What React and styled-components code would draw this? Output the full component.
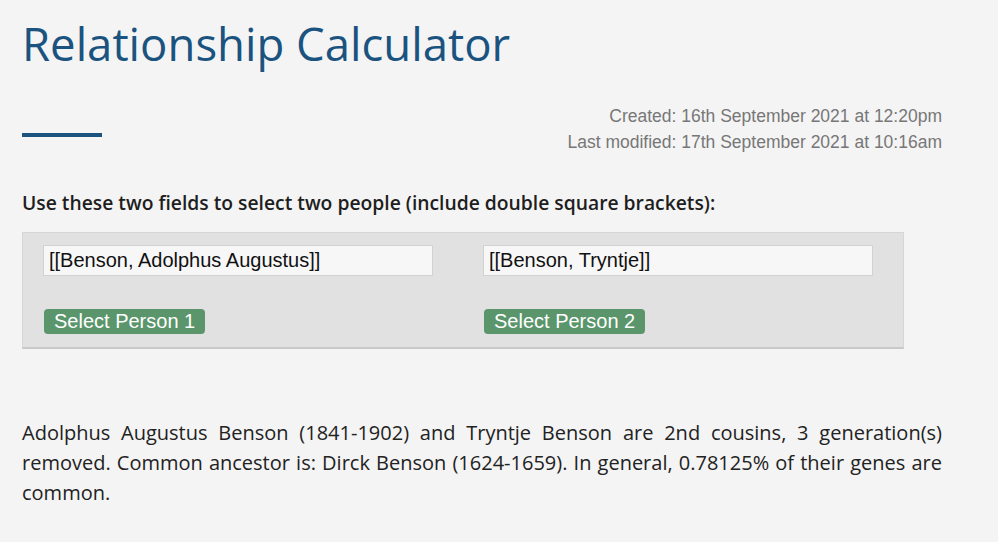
import React from "react";
import styled, { createGlobalStyle } from "styled-components";

const GlobalStyle = createGlobalStyle`
  html, body {
    margin: 0;
    padding: 0;
    background: #f4f4f4;
  }
  body {
    font-family: "Open Sans", "Noto Sans", sans-serif;
    color: #222;
  }
`;

const Page = styled.div`
  padding: 0 56px 0 22px;
`;

const Title = styled.h1`
  margin: 0;
  padding-top: 11px;
  font-size: 45.5px;
  font-weight: 400;
  line-height: 64px;
  color: #1b5380;
`;

const HeaderRow = styled.div`
  display: flex;
  justify-content: space-between;
  align-items: flex-end;
  margin-top: 28px;
`;

const Rule = styled.div`
  width: 80px;
  height: 4px;
  background: #1b5380;
  margin-bottom: 18px;
`;

const Meta = styled.div`
  font-family: "Liberation Sans", Arial, sans-serif;
  font-size: 17.5px;
  line-height: 26px;
  color: #777;
  text-align: right;
`;

const Label = styled.p`
  margin: 35px 0 0;
  font-size: 19.3px;
  font-weight: 600;
  line-height: 26px;
  color: #1e1e1e;
`;

const FieldBox = styled.div`
  display: grid;
  grid-template-columns: 1fr 1fr;
  width: 880px;
  margin-top: 16px;
  padding: 12px 0 13px;
  background: #e1e1e1;
  border: 1px solid #d6d6d6;
  border-bottom: 2px solid #c9c9c9;
`;

const Field = styled.div`
  display: flex;
  flex-direction: column;
  align-items: flex-start;
  gap: 33px;
  padding-left: 20px;
`;

const TextInput = styled.input`
  box-sizing: border-box;
  width: 390px;
  height: 31px;
  padding: 0 5px;
  font-family: "Liberation Sans", Arial, sans-serif;
  font-size: 20px;
  color: #111;
  background: #f7f7f7;
  border: 1px solid #d2d2d2;
  outline: none;
`;

const SelectButton = styled.button`
  height: 25px;
  padding: 0 10px;
  margin-left: 1px;
  font-family: "Liberation Sans", Arial, sans-serif;
  font-size: 20px;
  line-height: 25px;
  color: #fff;
  background: #5a956b;
  border: none;
  border-radius: 4px;
  cursor: pointer;
`;

const Result = styled.p`
  margin: 69px 0 0;
  font-size: 20px;
  line-height: 30px;
  text-align: justify;
  color: #222;
`;

export default function App() {
  return (
    <>
      <GlobalStyle />
      <Page>
        <Title>Relationship Calculator</Title>
        <HeaderRow>
          <Rule />
          <Meta>
            <div>Created: 16th September 2021 at 12:20pm</div>
            <div>Last modified: 17th September 2021 at 10:16am</div>
          </Meta>
        </HeaderRow>
        <Label>Use these two fields to select two people (include double square brackets):</Label>
        <FieldBox>
          <Field>
            <TextInput defaultValue="[[Benson, Adolphus Augustus]]" />
            <SelectButton>Select Person 1</SelectButton>
          </Field>
          <Field>
            <TextInput defaultValue="[[Benson, Tryntje]]" />
            <SelectButton>Select Person 2</SelectButton>
          </Field>
        </FieldBox>
        <Result>
          Adolphus Augustus Benson (1841-1902) and Tryntje Benson are 2nd cousins, 3 generation(s)
          removed. Common ancestor is: Dirck Benson (1624-1659). In general, 0.78125% of their genes are
          common.
        </Result>
      </Page>
    </>
  );
}
